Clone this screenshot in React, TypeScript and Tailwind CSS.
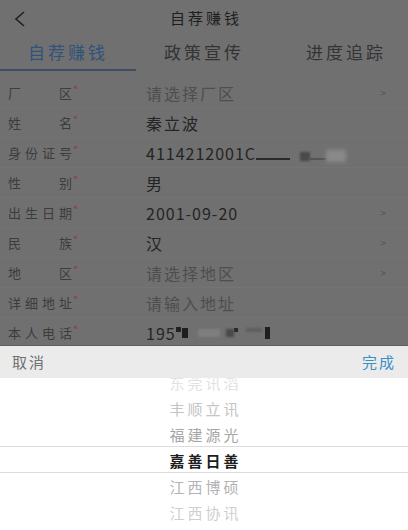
import React from 'react'

const rows = [
  { label: ['厂', '区'], value: '请选择厂区', placeholder: true, arrow: true },
  { label: ['姓', '名'], value: '秦立波' },
  { label: ['身', '份', '证', '号'], value: 'id' },
  { label: ['性', '别'], value: '男' },
  { label: ['出', '生', '日', '期'], value: '2001-09-20', arrow: true },
  { label: ['民', '族'], value: '汉', arrow: true },
  { label: ['地', '区'], value: '请选择地区', placeholder: true, arrow: true },
  { label: ['详', '细', '地', '址'], value: '请输入地址', placeholder: true },
  { label: ['本', '人', '电', '话'], value: 'phone' },
]

const pickerItems = [
  { name: '东莞讯滔', cls: 'text-[#e2e2e2]' },
  { name: '丰顺立讯', cls: 'text-[#c4c4c4]' },
  { name: '福建源光', cls: 'text-[#a6a6a6]' },
  { name: '嘉善日善', cls: 'text-[#1e1e1e] font-bold' },
  { name: '江西博硕', cls: 'text-[#b2b2b2]' },
  { name: '江西协讯', cls: 'text-[#cfcfcf]' },
]

function Value({ v, placeholder }: { v: string; placeholder?: boolean }) {
  if (v === 'id') {
    return (
      <div className="flex items-end">
        <span className="text-[16px] text-[#242424] tracking-[1px]">4114212001C</span>
        <span className="h-[2px] w-[34px] bg-[#2a2a2a] mb-[5px]" />
        <span className="h-[9px] w-[10px] bg-[#4a4a4a] mb-[4px] ml-[10px] blur-[1px]" />
        <span className="h-[2px] w-[16px] bg-[#555] mb-[5px]" />
        <span className="h-[12px] w-[20px] bg-[#8a8a8a] mb-[3px] blur-[2px]" />
      </div>
    )
  }
  if (v === 'phone') {
    return (
      <div className="flex items-center">
        <span className="text-[16px] text-[#242424] tracking-[1px]">195</span>
        <span className="h-[5px] w-[5px] bg-[#222] -mt-[6px]" />
        <span className="h-[10px] w-[6px] bg-[#1f1f1f] ml-[1px]" />
        <span className="h-[8px] w-[22px] bg-[#7e7e7e] ml-[10px] blur-[1px]" />
        <span className="h-[8px] w-[8px] bg-[#4a4a4a] ml-[6px] blur-[1px]" />
        <span className="h-[4px] w-[4px] bg-[#2a2a2a] -mt-[5px]" />
        <span className="h-[4px] w-[16px] bg-[#5e5e5e] ml-[8px] -mt-[5px] blur-[1px]" />
        <span className="h-[12px] w-[5px] bg-[#1f1f1f] ml-[3px]" />
      </div>
    )
  }
  const digits = /^[0-9-]+$/.test(v)
  return (
    <span
      className={
        placeholder
          ? 'text-[16px] tracking-[2px] text-[#4e4e4e]'
          : digits
            ? 'text-[16px] tracking-[1px] text-[#242424]'
            : 'text-[16px] tracking-[2px] text-[#242424]'
      }
    >
      {v}
    </span>
  )
}

export default function App() {
  return (
    <div
      className="relative w-[408px] h-[530px] overflow-hidden bg-[#707070]"
      style={{ fontFamily: '"Noto Sans CJK SC", "Noto Sans", sans-serif' }}
    >
      {/* Header */}
      <div className="relative flex items-center justify-center h-[36px]">
        <svg className="absolute left-[14px] top-[11px]" width="12" height="16" viewBox="0 0 12 16">
          <path d="M10 1 L2 8 L10 15" fill="none" stroke="#202020" strokeWidth="1.6" />
        </svg>
        <span className="text-[15px] tracking-[3px] text-[#1e1e1e] pl-[4px]">自荐赚钱</span>
      </div>

      {/* Tabs */}
      <div className="grid grid-cols-3 h-[35px]">
        <div className="flex flex-col items-center justify-between">
          <span className="text-[17px] tracking-[3px] text-[#30527c] mt-[3px]">自荐赚钱</span>
          <div className="h-[2px] w-full bg-[#3e4d60]" />
        </div>
        <div className="flex justify-center">
          <span className="text-[17px] tracking-[3px] text-[#333] mt-[3px]">政策宣传</span>
        </div>
        <div className="flex justify-center pl-[12px]">
          <span className="text-[17px] tracking-[3px] text-[#333] mt-[3px]">进度追踪</span>
        </div>
      </div>
      <div className="h-[7px]" />

      {/* Form rows */}
      <div>
        {rows.map((r, i) => (
          <div key={i} className="flex items-center h-[30px] border-b border-[#747474]">
            <div className="flex items-center w-[146px] pl-[8px]">
              <div className="flex justify-between w-[64px] text-[13px] text-[#3c3c3c]">
                {r.label.map((c, j) => (
                  <span key={j}>{c}</span>
                ))}
              </div>
              <span className="text-[11px] text-[#8c4040] -mt-[6px] ml-[1px]">*</span>
            </div>
            <div className="flex-1">
              <Value v={r.value} placeholder={r.placeholder} />
            </div>
            {r.arrow && <span className="text-[10px] text-[#505050] mr-[22px]">&gt;</span>}
          </div>
        ))}
      </div>

      {/* Picker sheet */}
      <div className="absolute left-0 right-0 bottom-0 h-[185px] flex flex-col bg-white">
        <div className="flex items-center justify-between h-[33px] px-[12px] bg-[#ebebeb] border-t border-[#5c5c5c]">
          <span className="text-[15px] tracking-[2px] text-[#707070]">取消</span>
          <span className="text-[15px] tracking-[2px] text-[#3c8fc4]">完成</span>
        </div>
        <div className="relative flex-1 overflow-hidden">
          <div className="absolute left-0 right-0 top-[68px] h-[27px] border-y border-[#dcdcdc]" />
          <div className="flex flex-col items-center -mt-[8px]">
            {pickerItems.map((p) => (
              <div key={p.name} className={`h-[26px] flex items-center text-[15px] tracking-[3px] pl-[3px] ${p.cls}`}>
                {p.name}
              </div>
            ))}
          </div>
        </div>
      </div>
    </div>
  )
}
